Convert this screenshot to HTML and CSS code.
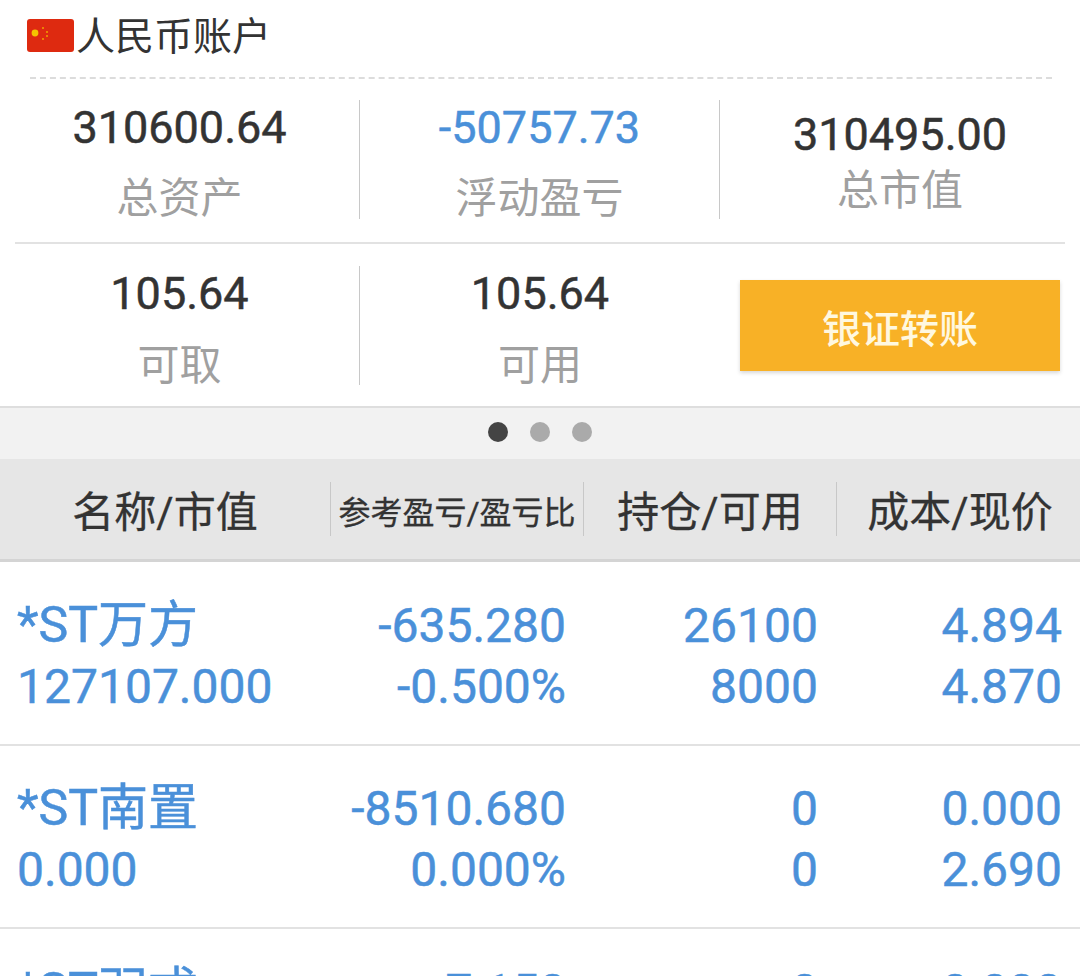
FILE: index.html
```html
<!DOCTYPE html>
<html lang="zh-CN">
<head>
<meta charset="utf-8">
<title>人民币账户</title>
<link rel="stylesheet" href="styles.css">
</head>
<body>
<main class="page">
  <header class="account">
    <svg class="flag" viewBox="0 0 47 33" aria-hidden="true">
      <rect width="47" height="33" rx="3" fill="#de2a10"/>
      <circle cx="8" cy="14" r="3.4" fill="#f5c400"/>
      <circle cx="16" cy="9" r="1" fill="#f0a000"/>
      <circle cx="20" cy="13" r="1" fill="#f0a000"/>
      <circle cx="20" cy="17" r="1" fill="#f0a000"/>
      <circle cx="16" cy="20" r="1" fill="#f0a000"/>
    </svg>
    <span class="account-title">人民币账户</span>
  </header>
  <hr class="dash">

  <section class="summary">
    <div class="stats stats-top">
      <div class="stat"><div class="num">310600.64</div><div class="lab">总资产</div></div>
      <div class="stat"><div class="num blue">-50757.73</div><div class="lab">浮动盈亏</div></div>
      <div class="stat stat-tight"><div class="num">310495.00</div><div class="lab">总市值</div></div>
    </div>
    <hr class="rule">
    <div class="stats stats-bottom">
      <div class="stat"><div class="num">105.64</div><div class="lab">可取</div></div>
      <div class="stat stat-last"><div class="num">105.64</div><div class="lab">可用</div></div>
      <div class="action"><button class="transfer" type="button">银证转账</button></div>
    </div>
  </section>

  <nav class="dots" aria-label="分页">
    <span class="dot dot-on"></span><span class="dot"></span><span class="dot"></span>
  </nav>

  <div class="thead">
    <div class="th th-1">名称/市值</div>
    <div class="th th-2">参考盈亏/盈亏比</div>
    <div class="th th-3">持仓/可用</div>
    <div class="th th-4">成本/现价</div>
  </div>

  <div class="rows">
    <div class="row">
      <div class="cell c1"><div class="name">*ST万方</div><div>127107.000</div></div>
      <div class="cell c2"><div>-635.280</div><div>-0.500%</div></div>
      <div class="cell c3"><div>26100</div><div>8000</div></div>
      <div class="cell c4"><div>4.894</div><div>4.870</div></div>
    </div>
    <div class="row">
      <div class="cell c1"><div class="name">*ST南置</div><div>0.000</div></div>
      <div class="cell c2"><div>-8510.680</div><div>0.000%</div></div>
      <div class="cell c3"><div>0</div><div>0</div></div>
      <div class="cell c4"><div>0.000</div><div>2.690</div></div>
    </div>
    <div class="row">
      <div class="cell c1"><div class="name">*ST羽戎</div></div>
      <div class="cell c2"><div>-7.150</div></div>
      <div class="cell c3"><div>0</div></div>
      <div class="cell c4"><div>0.000</div></div>
    </div>
  </div>
</main>
</body>
</html>
```
FILE: styles.css
```css
* { box-sizing: border-box; }
html, body { margin: 0; padding: 0; }
body {
  width: 1080px;
  height: 976px;
  overflow: hidden;
  background: #fff;
  font-family: "Roboto", "Noto Sans CJK SC", sans-serif;
  color: #333;
}
.page { width: 1080px; height: 976px; overflow: hidden; }

.account {
  display: flex;
  align-items: center;
  height: 77px;
  padding: 0 0 3px 27px;
}
.flag { width: 47px; height: 33px; flex: none; margin-bottom: 4px; }
.account-title { font-size: 39px; line-height: 44px; color: #333; margin-left: 2px; }
.dash { height: 2px; margin: 0 28px 0 30px; border: 0; border-top: 2px dashed #dcdcdc; }
.rule { height: 2px; margin: 0 15px; border: 0; background: #e2e2e2; }

.stats { display: grid; grid-template-columns: repeat(3, 360px); }
.stats-top { height: 163px; padding-top: 21px; }
.stats-bottom { height: 162px; padding-top: 22px; }
.stat { height: 119px; padding-top: 1px; text-align: center; border-right: 1px solid #c8c8c8; }
.stat-last { border-right: 0; }
.stat-tight { border-right: 0; padding-top: 8px; }
.num {
  font-size: 45px;
  line-height: 54px;
  font-weight: 400;
  letter-spacing: 0;
  color: #333;
  -webkit-text-stroke: 0.5px currentColor;
}
.num.blue { color: #4a90d9; }
.lab { font-size: 42px; line-height: 50px; margin-top: 19px; color: #a0a0a0; }
.stats-bottom .lab { margin-top: 20px; }
.stat-tight .lab { margin-top: 4px; }
.action { padding: 14px 20px 0; }
.transfer {
  display: block;
  width: 320px;
  height: 91px;
  border: 0;
  background: #f8b126;
  box-shadow: 0 2px 4px rgba(0,0,0,.16);
  color: #fff8e0;
  font-family: inherit;
  font-size: 39px;
  font-weight: 500;
}

.dots {
  display: flex;
  justify-content: center;
  align-items: center;
  gap: 22px;
  height: 53px;
  padding-bottom: 3px;
  background: #f2f2f2;
  border-top: 2px solid #dedede;
}
.dot { width: 20px; height: 20px; border-radius: 50%; background: #aaa; }
.dot-on { background: #444; }

.thead {
  display: grid;
  grid-template-columns: 330px 253px 253px 244px;
  align-items: center;
  height: 103px;
  background: #e6e6e6;
  border-bottom: 3px solid #d4d4d4;
}
.th {
  height: 54px;
  line-height: 62px;
  text-align: center;
  font-size: 42px;
  font-weight: 400;
  -webkit-text-stroke: 0.3px currentColor;
  color: #333;
  white-space: nowrap;
  border-left: 1px solid #c8c8c8;
}
.th-1 { border-left: 0; }
.th-2 { font-size: 32px; }
.th-4 { padding-left: 3px; }

.rows { padding-top: 1px; }
.row {
  display: grid;
  grid-template-columns: 273px 276px 252px 244px;
  height: 183px;
  padding: 32px 18px 0 17px;
  border-bottom: 2px solid #e2e2e2;
  font-size: 48px;
  line-height: 61px;
  color: #4a90d9;
  letter-spacing: 0;
  font-weight: 400;
  -webkit-text-stroke: 0.5px currentColor;
}
.name { font-size: 50px; }
.c2, .c3, .c4 { text-align: right; }
.cell > div { white-space: nowrap; }
```
